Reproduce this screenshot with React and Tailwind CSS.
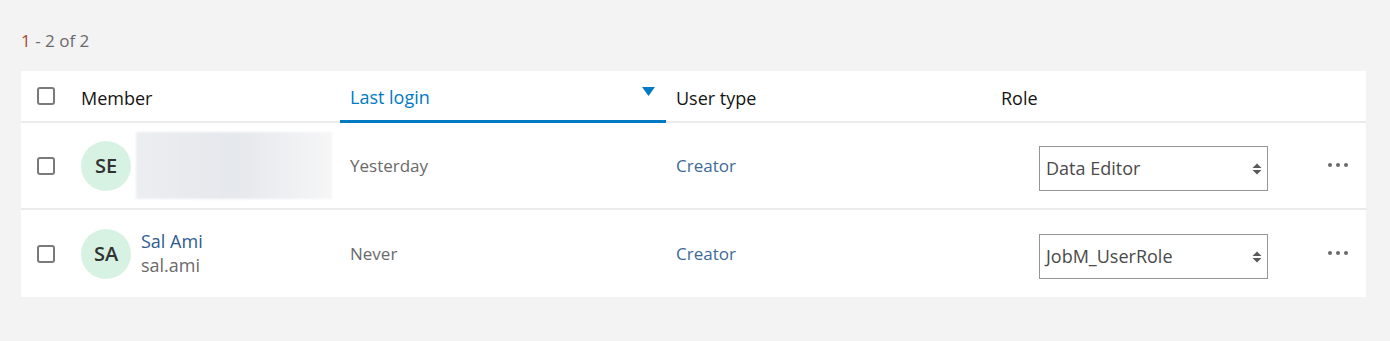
const font = { fontFamily: '"Open Sans", "Noto Sans", sans-serif' };

const rows = [
  { initials: "SE", blurred: true, login: "Yesterday", type: "Creator", role: "Data Editor" },
  { initials: "SA", name: "Sal Ami", user: "sal.ami", login: "Never", type: "Creator", role: "JobM_UserRole" },
];

function Checkbox() {
  return <div className="w-[18px] h-[18px] border-2 border-[#7a7a7a] rounded-[3px] bg-white" />;
}

function Dots() {
  return (
    <div className="flex items-center gap-[4px]">
      <span className="w-[4px] h-[4px] rounded-full bg-[#6a6a6a]" />
      <span className="w-[4px] h-[4px] rounded-full bg-[#6a6a6a]" />
      <span className="w-[4px] h-[4px] rounded-full bg-[#6a6a6a]" />
    </div>
  );
}

function RoleSelect({ value }) {
  return (
    <div className="w-[229px] h-[45px] border border-[#959595] bg-white flex items-center justify-between pl-[6px] pr-[5px]">
      <span className="text-[18px] text-[#4a4a4a]">{value}</span>
      <svg width="10" height="12" viewBox="0 0 10 12" fill="#5a5a5a">
        <path d="M5 0.5L9.5 5H0.5z" />
        <path d="M5 11.5L9.5 7H0.5z" />
      </svg>
    </div>
  );
}

export default function App() {
  return (
    <div className="w-[1390px] h-[341px] bg-[#f3f3f3] pl-[21px] pr-[24px] pt-[29px]" style={font}>
      <div className="text-[17px] text-[#6a6a6a] h-[24px] leading-[24px]">
        <span className="text-[#a8493a]">1</span> - 2 of 2
      </div>

      <div className="mt-[18px] bg-white">
        {/* Header */}
        <div className="flex h-[52px] border-b-2 border-[#ebebeb]">
          <div className="w-[50px] flex items-center justify-center">
            <Checkbox />
          </div>
          <div className="w-[269px] pl-[10px] pt-[4px] flex items-center text-[18px] text-[#151515]">Member</div>
          <div className="w-[326px] pl-[10px] pr-[11px] pt-[4px] flex items-center justify-between text-[18px] text-[#007ac2] border-b-[3px] border-[#007ac2] -mb-[2px]">
            <span>Last login</span>
            <svg width="13" height="9" viewBox="0 0 13 9" className="-mt-[13px]">
              <path d="M0 0H13L6.5 9z" fill="#007ac2" />
            </svg>
          </div>
          <div className="w-[325px] pl-[10px] pt-[4px] flex items-center text-[18px] text-[#151515]">User type</div>
          <div className="flex-1 pl-[10px] pt-[4px] flex items-center text-[18px] text-[#151515]">Role</div>
        </div>

        {rows.map((r, i) => (
          <div key={i} className={`flex h-[87px] ${i === 0 ? "border-b-2 border-[#ebebeb]" : ""}`}>
            <div className="w-[50px] flex items-center justify-center">
              <Checkbox />
            </div>
            <div className="w-[269px] pl-[10px] flex items-center">
              <div className="w-[50px] h-[50px] rounded-full bg-[#d7f2e2] flex items-center justify-center text-[20px] font-semibold text-[#323232] shrink-0">
                {r.initials}
              </div>
              {r.blurred ? (
                <div className="ml-[5px] w-[196px] h-[67px] bg-gradient-to-r from-[#eceef1] via-[#e5e8ec] to-[#f6f6f7] blur-[1px]" />
              ) : (
                <div className="ml-[10px] flex flex-col leading-[24px] -mt-[2px]">
                  <span className="text-[18px] text-[#2e5c8f]">{r.name}</span>
                  <span className="text-[18px] text-[#6a6a6a]">{r.user}</span>
                </div>
              )}
            </div>
            <div className="w-[326px] pl-[10px] flex items-center text-[17px] text-[#6a6a6a]">{r.login}</div>
            <div className="w-[325px] pl-[10px] flex items-center text-[17px] text-[#3c6a9a]">{r.type}</div>
            <div className="flex-1 flex items-center">
              <div className="ml-[48px] mt-[6px]">
                <RoleSelect value={r.role} />
              </div>
              <div className="ml-auto mr-[18px] -mt-[2px]">
                <Dots />
              </div>
            </div>
          </div>
        ))}
      </div>
    </div>
  );
}
